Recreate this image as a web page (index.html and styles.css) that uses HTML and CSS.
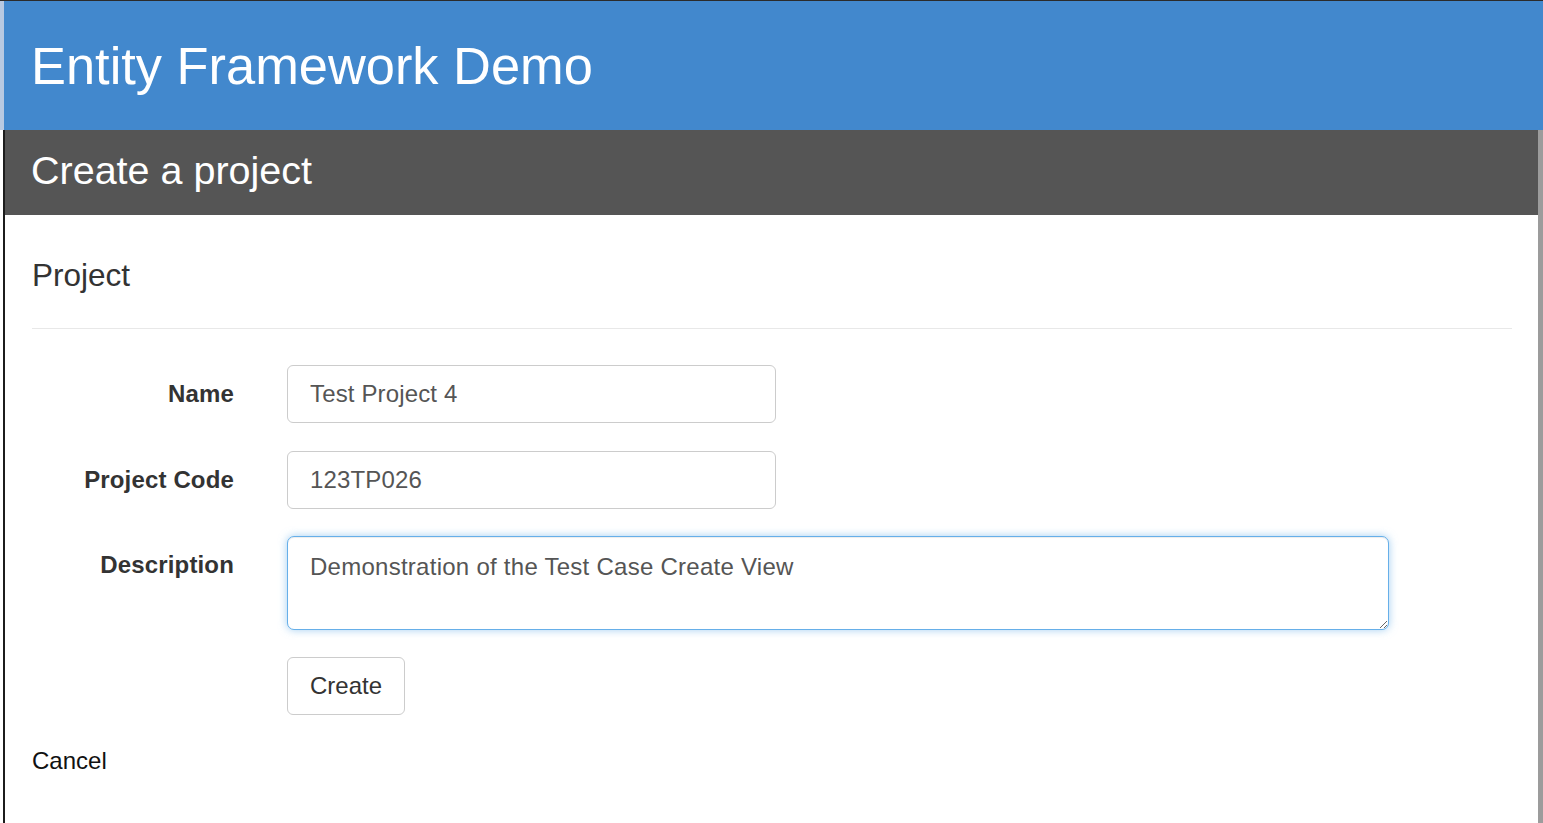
FILE: index.html
```html
<!DOCTYPE html>
<html lang="en">
<head>
<meta charset="utf-8">
<title>Create a project</title>
<link rel="stylesheet" href="styles.css">
</head>
<body>
<div class="page">
  <header class="topbar">
    <h1 class="brand">Entity Framework Demo</h1>
  </header>
  <main class="main">
    <div class="titlebar">
      <h2 class="title">Create a project</h2>
    </div>
    <div class="content">
      <h4 class="section">Project</h4>
      <hr class="rule">
      <form class="form">
        <div class="row">
          <label class="label" for="name">Name</label>
          <input class="field short" id="name" type="text" value="Test Project 4">
        </div>
        <div class="row">
          <label class="label" for="code">Project Code</label>
          <input class="field short" id="code" type="text" value="123TP026">
        </div>
        <div class="row">
          <label class="label" for="desc">Description</label>
          <textarea class="field area focus" id="desc">Demonstration of the Test Case Create View</textarea>
        </div>
        <div class="row">
          <span class="label"></span>
          <button class="btn" type="button">Create</button>
        </div>
      </form>
      <a class="cancel" href="#">Cancel</a>
    </div>
  </main>
</div>
</body>
</html>
```
FILE: styles.css
```css
* { box-sizing: border-box; }
html, body { margin: 0; padding: 0; }
body {
  background: #fff;
  font-family: "Liberation Sans", Arial, sans-serif;
  color: #333;
  height: 823px;
  overflow: hidden;
}
.page {
  border-top: 1px solid #2b2b2b;
  height: 823px;
  display: flex;
  flex-direction: column;
}
.topbar {
  height: 129px;
  background: #4288cd;
  border-left: 4px solid #b7c9e2;
  display: flex;
  align-items: center;
  padding-left: 27px;
}
.brand {
  margin: 0;
  font-weight: normal;
  font-size: 52.4px;
  line-height: normal;
  color: #fff;
}
.main {
  flex: 1;
  margin-left: 3px;
  border-left: 2px solid #1c1c1c;
  border-right: 5px solid #9c9c9c;
}
.titlebar {
  height: 85px;
  background: #555;
  display: flex;
  align-items: center;
  padding-left: 26px;
}
.title {
  margin: 0;
  font-weight: normal;
  font-size: 39.5px;
  line-height: normal;
  color: #fff;
  position: relative;
  top: -2px;
}
.content {
  padding: 0 26px 0 27px;
}
.section {
  margin: 0;
  padding-top: 42px;
  font-weight: normal;
  font-size: 31.5px;
  line-height: normal;
  color: #333;
}
.rule {
  border: 0;
  border-top: 1px solid #e8e8e8;
  margin: 34px 0 0 0;
}
.form {
  margin-top: 36px;
  display: flex;
  flex-direction: column;
  gap: 28px;
}
.row {
  display: flex;
  align-items: flex-start;
}
.label {
  width: 202px;
  flex: none;
  margin-right: 53px;
  text-align: right;
  font-weight: bold;
  font-size: 24px;
  letter-spacing: 0.15px;
  line-height: 58px;
  height: 58px;
  color: #333;
}
.field {
  font-family: "Liberation Sans", Arial, sans-serif;
  font-size: 24px;
  color: #555;
  background: #fff;
  border: 1px solid #ccc;
  border-radius: 6px;
  outline: none;
  margin: 0;
}
.short {
  width: 489px;
  height: 58px;
  padding: 0 22px;
  letter-spacing: 0.15px;
}
.area {
  width: 1102px;
  height: 94px;
  padding: 13px 22px;
  line-height: 34px;
  letter-spacing: 0.26px;
  resize: vertical;
  display: block;
  border-radius: 7px;
}
.focus {
  border-color: #66afe9;
  box-shadow: inset 0 1px 1px rgba(0,0,0,.075), 0 0 8px rgba(102,175,233,.6);
}
.row:nth-child(3) { margin-top: -1px; }
.row:nth-child(4) { margin-top: -1px; }
.btn {
  font-family: "Liberation Sans", Arial, sans-serif;
  font-size: 24px;
  color: #333;
  background: #fff;
  border: 1px solid #ccc;
  border-radius: 6px;
  height: 58px;
  width: 118px;
  padding: 0;
}
.cancel {
  display: block;
  margin-top: 32px;
  font-size: 24px;
  line-height: normal;
  color: #111;
  text-decoration: none;
  width: max-content;
}
```
